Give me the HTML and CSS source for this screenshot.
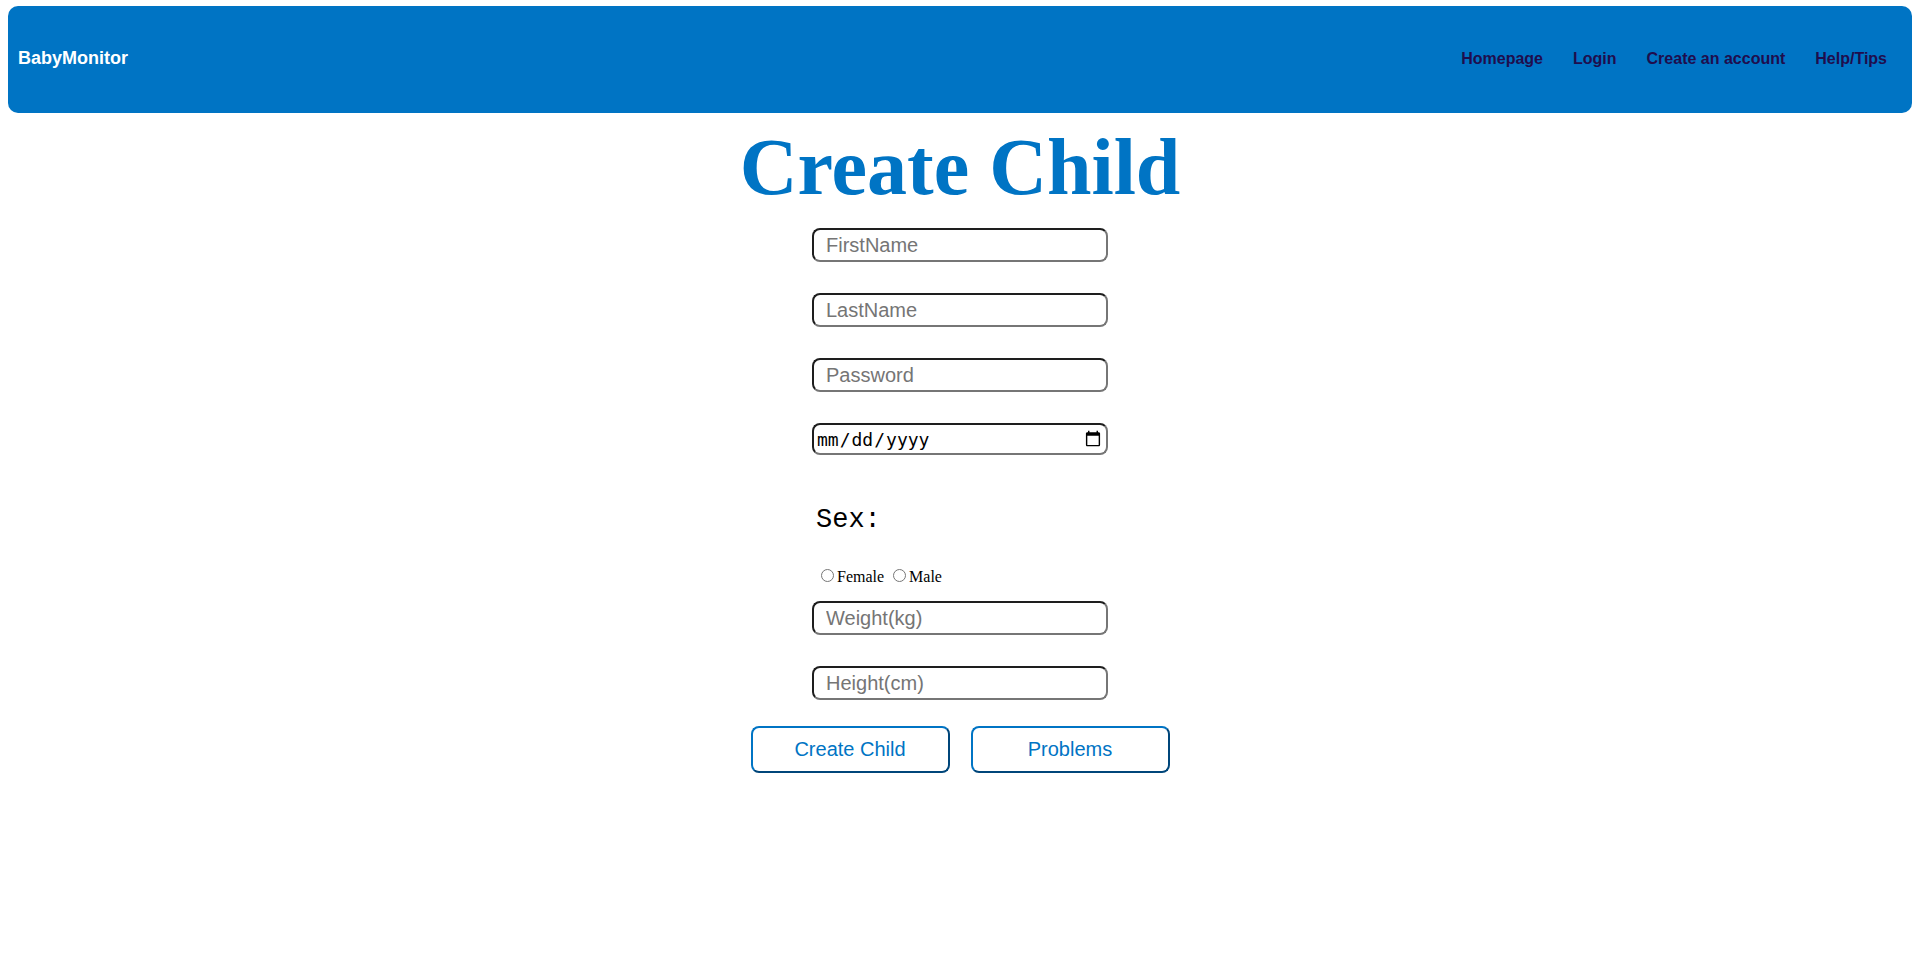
FILE: index.html
```html
<!DOCTYPE html>
<html lang="en">
<head>
<meta charset="utf-8">
<title>Create Child</title>
<link rel="stylesheet" href="styles.css">
</head>
<body>
<header class="topbar">
  <span class="brand">BabyMonitor</span>
  <nav class="nav">
    <a class="nav-link" href="#">Homepage</a>
    <a class="nav-link" href="#">Login</a>
    <a class="nav-link" href="#">Create an account</a>
    <a class="nav-link" href="#">Help/Tips</a>
  </nav>
</header>
<main class="page">
  <h1 class="title">Create Child</h1>
  <form class="form">
    <div class="fields">
      <input class="field" type="text" placeholder="FirstName">
      <input class="field" type="text" placeholder="LastName">
      <input class="field" type="password" placeholder="Password">
      <input class="field field-date" type="date">
      <div class="sex">
        <p class="sex-label">Sex:</p>
        <div class="radios"><input class="radio" type="radio" name="sex" id="f"><label for="f">Female</label> <input class="radio" type="radio" name="sex" id="m"><label for="m">Male</label></div>
      </div>
      <input class="field" type="text" placeholder="Weight(kg)">
      <input class="field" type="text" placeholder="Height(cm)">
    </div>
    <div class="actions">
      <button class="btn" type="button">Create Child</button>
      <button class="btn" type="button">Problems</button>
    </div>
  </form>
</main>
</body>
</html>
```

FILE: styles.css
```css
html, body {
  background: #ffffff;
}
body {
  margin: 6px 8px 8px;
  font-family: "Liberation Serif", "Times New Roman", serif;
}
.topbar {
  height: 107px;
  background: #0074c4;
  border-radius: 10px;
  display: flex;
  align-items: center;
  justify-content: space-between;
  padding: 0 25px 0 10px;
  box-sizing: border-box;
}
.brand {
  color: #ffffff;
  font-family: "Liberation Sans", Arial, sans-serif;
  font-weight: bold;
  font-size: 18px;
  margin-top: -2px;
}
.nav {
  display: flex;
  gap: 30px;
  margin-top: -2px;
}
.nav-link {
  color: #1f0d4d;
  text-decoration: none;
  font-family: "Liberation Sans", Arial, sans-serif;
  font-weight: bold;
  font-size: 16px;
}
.page {
  display: flex;
  flex-direction: column;
  align-items: center;
}
.title {
  margin: 9px 0 0;
  font-family: "Liberation Serif", "Times New Roman", serif;
  font-weight: bold;
  font-size: 80px;
  line-height: normal;
  color: #0074c4;
}
.form {
  display: flex;
  flex-direction: column;
  align-items: center;
  margin-top: 15px;
}
.fields {
  width: 296px;
  display: flex;
  flex-direction: column;
}
.field {
  box-sizing: border-box;
  width: 296px;
  height: 34px;
  margin: 0 0 31px;
  padding: 0 12px;
  border: 2px solid;
  border-color: #1e1e1e #767676 #767676 #1e1e1e;
  border-radius: 8px;
  font-family: "Liberation Sans", Arial, sans-serif;
  font-size: 20px;
  color: #000;
  background: #fff;
  outline: none;
}
.field::placeholder {
  color: #757575;
}
.fields .field:last-child {
  margin-bottom: 0;
}
.field-date {
  height: 32px;
  margin-bottom: 0;
  padding: 0 2px;
  font-family: "DejaVu Sans Mono", "Liberation Mono", monospace;
  font-size: 18px;
}
.sex {
  padding-left: 4px;
  margin-bottom: 15px;
}
.sex-label {
  margin: 50px 0 0;
  font-family: "Liberation Mono", "Courier New", monospace;
  font-size: 27px;
  line-height: 31px;
}
.radios {
  margin-top: 30px;
  font-family: "Liberation Serif", "Times New Roman", serif;
  font-size: 16px;
  line-height: normal;
}
.radio {
  width: 13px;
  height: 13px;
  margin: 3px 3px 0 5px;
  vertical-align: baseline;
}
.actions {
  display: flex;
  gap: 21px;
  margin-top: 26px;
}
.btn {
  box-sizing: border-box;
  width: 199px;
  height: 47px;
  background: #ffffff;
  border: 2px solid;
  border-color: #0074c4 #00467a #00467a #0074c4;
  border-radius: 8px;
  font-family: "Liberation Sans", Arial, sans-serif;
  font-size: 20px;
  color: #0074c4;
  padding: 0;
}
```
